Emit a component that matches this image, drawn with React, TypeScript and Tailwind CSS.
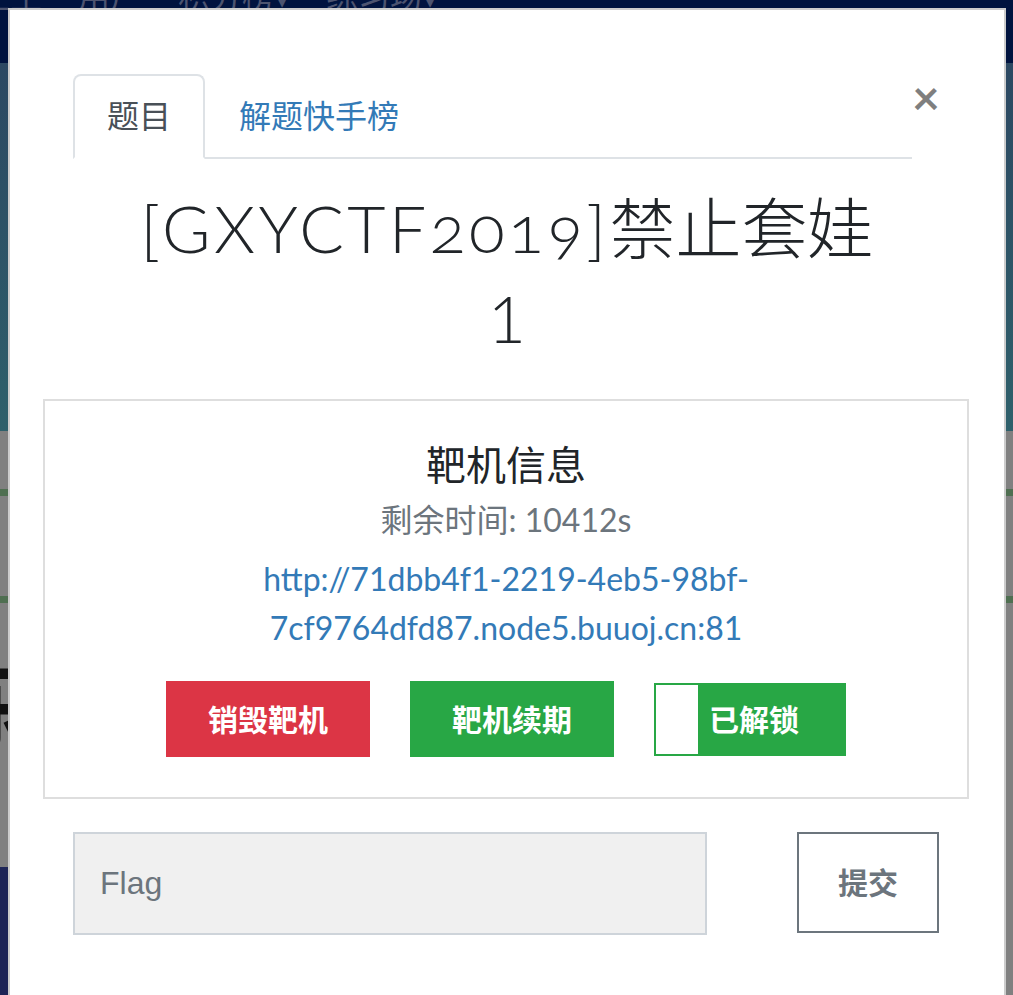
export default function App() {
  return (
    <div className="relative h-[995px] w-full overflow-hidden bg-[#808080] font-['Lato','Noto_Sans_CJK_SC',sans-serif]">
      {/* page under the backdrop */}
      <div className="h-[63px] overflow-hidden bg-[#00133f]">
        <div className="-mt-[28px] flex gap-[36px] text-[32px] leading-[48px] text-[#4d5470]">
          <span className="-ml-[22px]">主生</span>
          <span>用户</span>
          <span>积分榜▾</span>
          <span>练习场▾</span>
        </div>
      </div>
      <div className="h-[368px] bg-gradient-to-b from-[#2c4862] to-[#2e606b]" />
      <div className="h-[58px]" />
      <div className="h-[7px] bg-[#4f6f51]" />
      <div className="h-[100px]" />
      <div className="h-[7px] bg-[#4f6f51]" />
      <div className="-ml-[70px] mt-[40px] h-[120px] text-[96px] font-bold leading-[120px] text-[#111]">练练</div>
      <div className="mt-[104px] flex">
        <div className="h-[200px] w-[480px] bg-[#1e2557]" />
      </div>

      {/* modal */}
      <div className="absolute left-[8px] top-[8px] h-[1100px] w-[998px] border-2 border-black/20 bg-white">
        <div className="flex items-start pl-[63px] pt-[64px]">
          <div className="flex w-[839px] border-b-2 border-[#dee2e6]">
            <div className="-mb-[2px] rounded-t-[8px] border-2 border-[#dee2e6] border-b-white bg-white px-[32px] pb-[15px] pt-[16px] text-[32px] leading-[48px] text-[#495057]">
              题目
            </div>
            <div className="border-2 border-transparent px-[32px] pb-[15px] pt-[16px] text-[32px] leading-[48px] text-[#337ab7]">
              解题快手榜
            </div>
          </div>
          <button className="-mt-[1px] text-[48px] font-bold leading-[48px] text-black/50">×</button>
        </div>

        <h2 className="mt-[24px] text-center text-[66px] font-light leading-[90px] text-[#212529]">
          <span className="oldstyle-nums tracking-[3.5px]">[GXYCTF2019]</span>禁止套娃
          <br />
          1
        </h2>

        <div className="ml-[33px] mt-[36px] w-[926px] border-2 border-[#dedede] pb-[40px] pt-[40px] text-center">
          <h5 className="text-[40px] leading-[48px] text-[#212529]">靶机信息</h5>
          <p className="mt-[7px] text-[32px] leading-[48px] text-[#6c757d]">剩余时间: 10412s</p>
          <a className="mt-[10px] block text-[32px] leading-[49px] text-[#337ab7]">
            http://71dbb4f1-2219-4eb5-98bf-
            <br />
            7cf9764dfd87.node5.buuoj.cn:81
          </a>
          <div className="mt-[29px] flex items-center justify-center gap-[40px]">
            <button className="h-[76px] w-[204px] bg-[#dc3545] text-[30px] font-bold text-white">销毁靶机</button>
            <button className="h-[76px] w-[204px] bg-[#28a745] text-[30px] font-bold text-white">靶机续期</button>
            <div className="relative flex h-[73px] w-[192px] items-center justify-center border-2 border-[#28a745] bg-[#28a745] pl-[8px] text-[30px] font-bold text-white">
              <span className="absolute bottom-0 left-0 top-0 w-[42px] bg-white" />
              已解锁
            </div>
          </div>
        </div>

        <div className="ml-[63px] mt-[33px] flex items-start">
          <input
            placeholder="Flag"
            className="h-[103px] w-[634px] border-2 border-[#ced4da] bg-[#f0f0f0] pl-[25px] font-['Liberation_Sans',sans-serif] text-[32px] text-[#495057] outline-none placeholder:text-[#6c757d]"
          />
          <button className="ml-[90px] h-[101px] w-[142px] border-2 border-[#6c757d] bg-white text-[30px] font-bold text-[#6c757d]">
            提交
          </button>
        </div>
      </div>
    </div>
  );
}
